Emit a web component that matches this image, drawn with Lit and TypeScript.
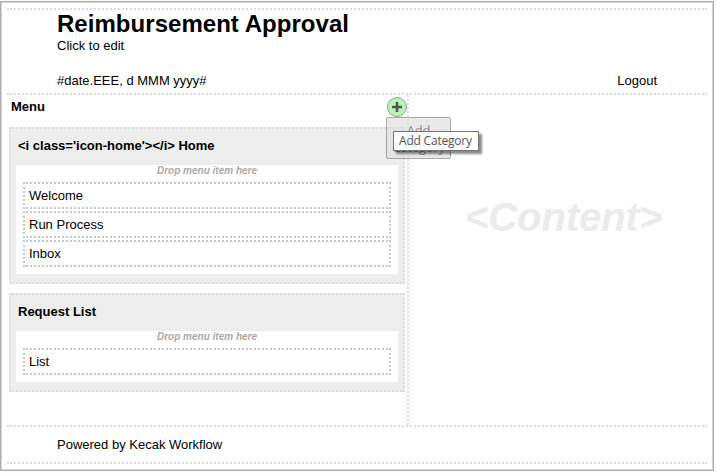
import { LitElement, html, css } from "lit";
import { customElement, property } from "lit/decorators.js";

@customElement("menu-category")
class MenuCategory extends LitElement {
  @property() label = "";
  @property({ attribute: false }) items: string[] = [];

  static styles = css`
    :host {
      display: block;
      box-sizing: border-box;
      border: 2px dotted #dcdcdc;
      background: #ededed;
      padding: 0 5px 8px;
    }
    .label {
      height: 36px;
      line-height: 33px;
      padding-left: 2px;
      font-weight: bold;
      box-sizing: border-box;
    }
    .list {
      background: #fff;
      padding: 0 7px 7px;
      display: flex;
      flex-direction: column;
      gap: 2px;
    }
    .hint {
      height: 15px;
      font: italic bold 10px/12px "Liberation Sans", Arial, sans-serif;
      color: #aaa;
      text-align: center;
    }
    .item {
      height: 27px;
      box-sizing: border-box;
      border: 2px dotted #c8c8c8;
      padding-left: 4px;
      line-height: 23px;
    }
  `;

  render() {
    return html`
      <div class="label">${this.label}</div>
      <div class="list">
        <div class="hint">Drop menu item here</div>
        ${this.items.map((i) => html`<div class="item">${i}</div>`)}
      </div>
    `;
  }
}

@customElement("app-root")
class AppRoot extends LitElement {
  static styles = css`
    :host {
      display: block;
      height: 474px;
      box-sizing: border-box;
      padding: 1px 3px 3px 0;
      background: #fdfdfd;
      font: 13px/15px "Liberation Sans", Arial, sans-serif;
      color: #000;
      overflow: hidden;
    }
    .frame {
      height: 470px;
      box-sizing: border-box;
      border: 1px solid #b0b0b0;
      background: #fff;
    }
    .page {
      height: 468px;
      box-sizing: border-box;
      border: 1px solid #d4d4d4;
      padding: 5px 5px 0;
      display: flex;
      flex-direction: column;
    }
    .header {
      height: 87px;
      box-sizing: border-box;
      border-top: 2px dotted #dcdcdc;
      border-bottom: 2px dotted #dcdcdc;
      padding: 0 50px;
    }
    .title {
      margin: 0;
      font-size: 24px;
      line-height: 28px;
      font-weight: bold;
      letter-spacing: 0.04px;
    }
    .bar {
      display: flex;
      justify-content: space-between;
      margin-top: 20px;
    }
    .main {
      height: 330px;
      display: flex;
    }
    .side {
      position: relative;
      width: 402px;
      box-sizing: border-box;
      border-right: 2px dotted #dcdcdc;
      padding: 0 2px;
      display: flex;
      flex-direction: column;
      gap: 9px;
    }
    .menu {
      height: 23px;
      line-height: 23px;
      padding-left: 2px;
      font-weight: bold;
    }
    .content {
      flex: 1;
      padding-top: 99px;
      padding-left: 11px;
      text-align: center;
      font: italic bold 40px/46px "Liberation Sans", Arial, sans-serif;
      letter-spacing: -0.1px;
      color: #ebebeb;
    }
    .footer {
      height: 39px;
      box-sizing: border-box;
      border-top: 2px dotted #dcdcdc;
      border-bottom: 2px dotted #dcdcdc;
      padding: 10px 50px 0;
    }
    .add {
      position: absolute;
      left: 380px;
      top: 1px;
      width: 20px;
      height: 22px;
    }
    .popup {
      position: absolute;
      left: 379px;
      top: 22px;
      width: 65px;
      height: 42px;
      box-sizing: border-box;
      border: 1px solid #888;
      border-radius: 2px;
      background: #e0e0e0;
      opacity: 0.7;
      padding-top: 4px;
      text-align: center;
      font: 13px/17px "Open Sans", "Noto Sans", sans-serif;
      letter-spacing: -0.2px;
      color: #555;
    }
    .tip {
      position: absolute;
      left: 386px;
      top: 36px;
      width: 86px;
      height: 20px;
      box-sizing: border-box;
      border: 1px solid #767676;
      background: rgba(255, 255, 255, 0.88);
      box-shadow: 3px 3px 2px rgba(0, 0, 0, 0.45);
      padding-left: 5px;
      white-space: nowrap;
      font: 12px/18px "Open Sans", "Noto Sans", sans-serif;
      letter-spacing: -0.2px;
      color: #575757;
    }
  `;

  render() {
    return html`
      <div class="frame">
        <div class="page">
          <header class="header">
            <h1 class="title">Reimbursement Approval</h1>
            <div>Click to edit</div>
            <div class="bar"><span>#date.EEE, d MMM yyyy#</span><span>Logout</span></div>
          </header>
          <div class="main">
            <div class="side">
              <div class="menu">Menu</div>
              <menu-category
                .label=${"<i class='icon-home'></i> Home"}
                .items=${["Welcome", "Run Process", "Inbox"]}
              ></menu-category>
              <menu-category .label=${"Request List"} .items=${["List"]}></menu-category>
              <svg class="add" viewBox="0 0 20 22">
                <circle cx="10" cy="11" r="9.5" fill="#b9f2b4" stroke="#9a9f9a" />
                <path d="M10 6v10M5 11h10" stroke="#555" stroke-width="2.6" />
              </svg>
              <div class="popup">Add<br />Category</div>
              <div class="tip">Add Category</div>
            </div>
            <div class="content">&lt;Content&gt;</div>
          </div>
          <footer class="footer">Powered by Kecak Workflow</footer>
        </div>
      </div>
    `;
  }
}
